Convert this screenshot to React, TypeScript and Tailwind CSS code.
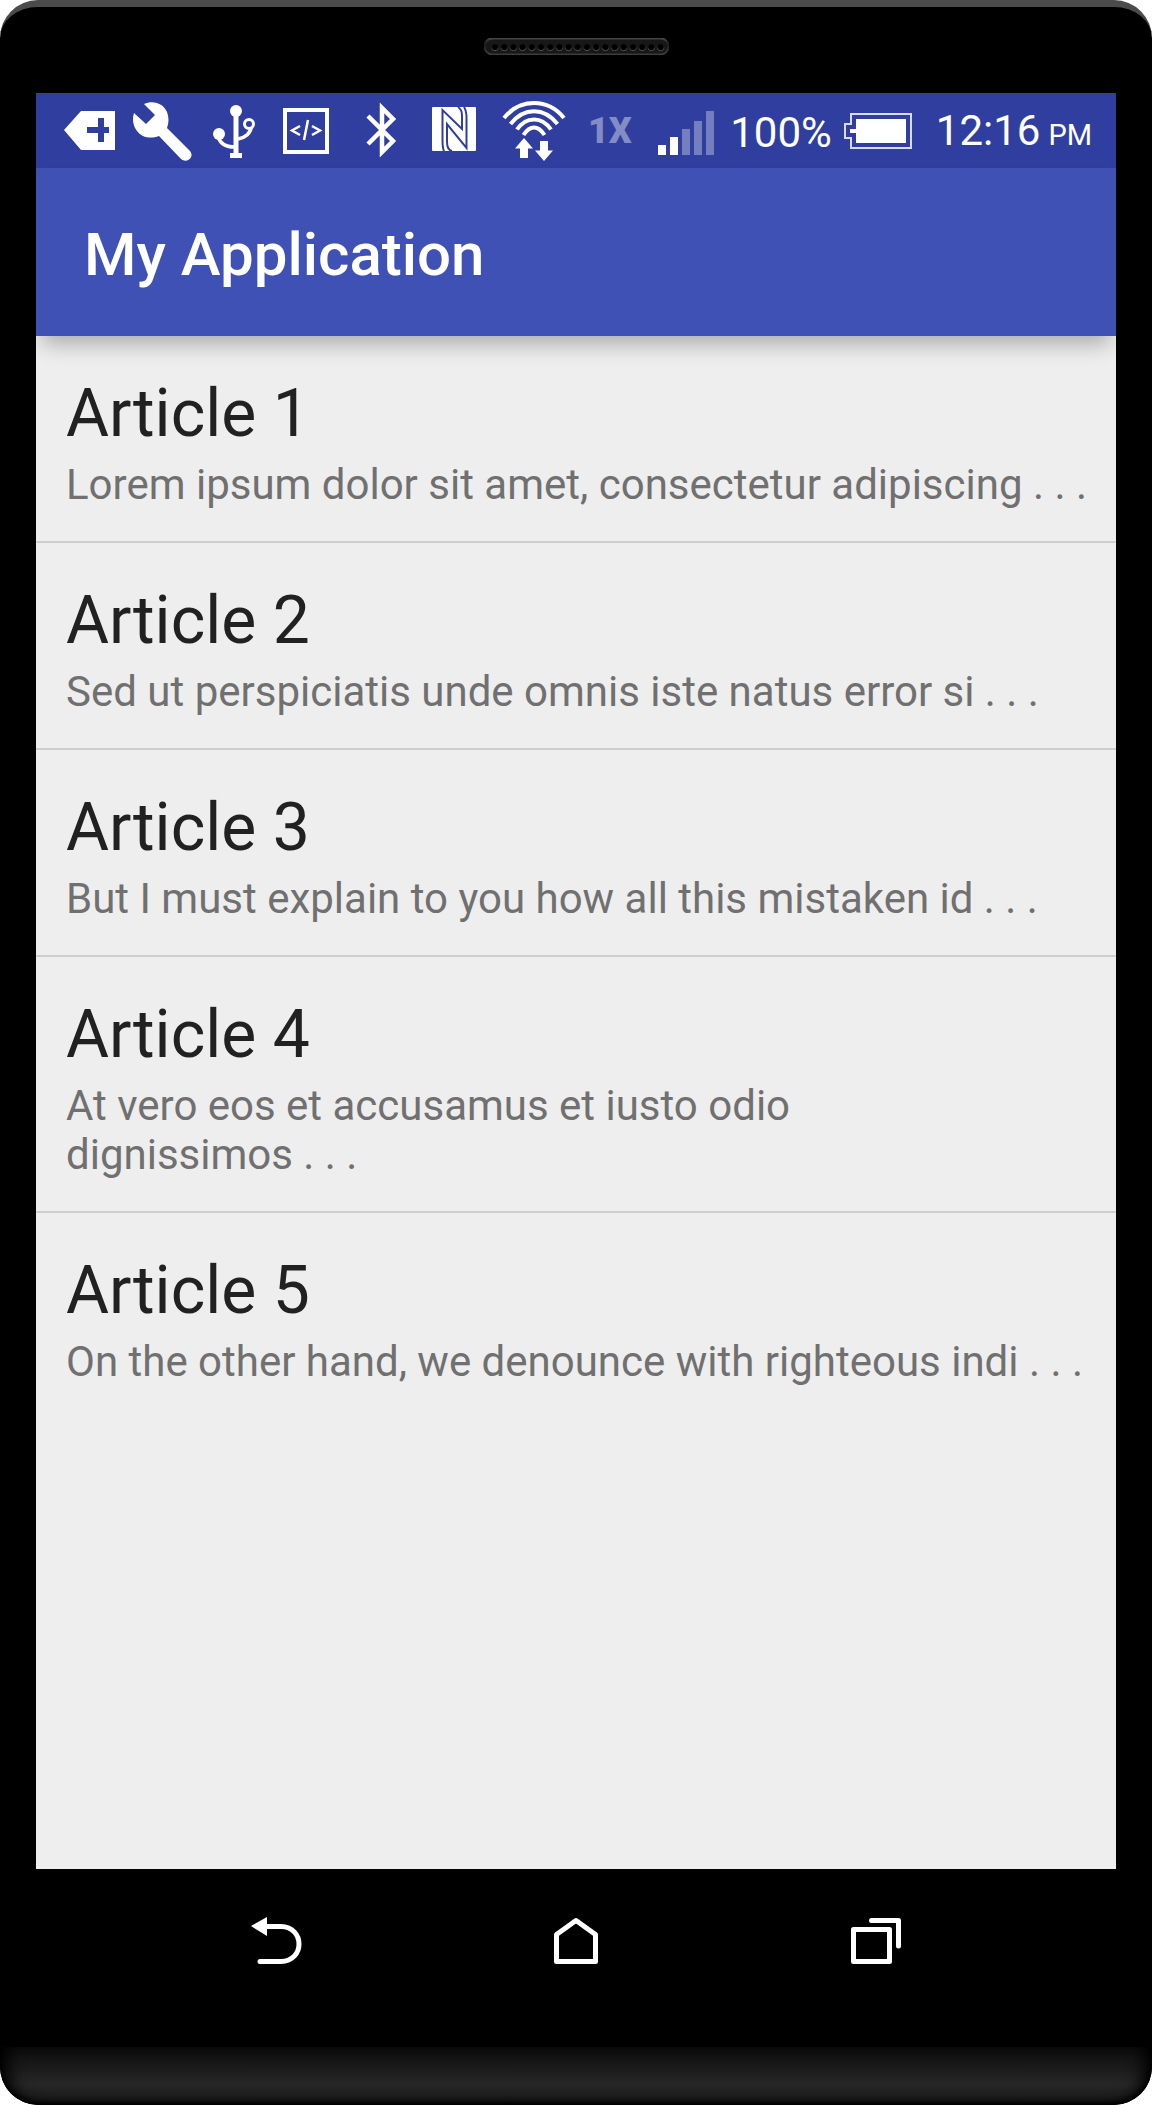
import type { ReactNode } from "react";

const articles = [
  { title: "Article 1", summary: "Lorem ipsum dolor sit amet, consectetur adipiscing . . ." },
  { title: "Article 2", summary: "Sed ut perspiciatis unde omnis iste natus error si . . ." },
  { title: "Article 3", summary: "But I must explain to you how all this mistaken id . . ." },
  { title: "Article 4", summary: "At vero eos et accusamus et iusto odio\ndignissimos . . ." },
  { title: "Article 5", summary: "On the other hand, we denounce with righteous indi . . ." },
];

function StatusIcon({ children }: { children: ReactNode }) {
  return (
    <svg viewBox="0 0 72 75" className="h-[75px] w-[72px] shrink-0" fill="#fff" aria-hidden="true">
      {children}
    </svg>
  );
}

function Speaker() {
  return (
    <svg viewBox="0 0 185 17" className="h-[17px] w-[185px]" aria-hidden="true">
      <defs>
        <linearGradient id="rim" x1="0" y1="0" x2="0" y2="1">
          <stop offset="0" stopColor="#474747" />
          <stop offset="0.35" stopColor="#1c1c1c" />
          <stop offset="1" stopColor="#3c3c3c" />
        </linearGradient>
        <linearGradient id="hole" x1="0" y1="0" x2="0" y2="1">
          <stop offset="0.35" stopColor="#161616" />
          <stop offset="1" stopColor="#565656" />
        </linearGradient>
      </defs>
      <rect x="0.5" y="0.5" width="184" height="16" rx="8" fill="#181818" stroke="url(#rim)" strokeWidth="2" />
      {Array.from({ length: 19 }, (_, i) => (
        <circle key={i} cx={11 + i * 9.2} cy="9.2" r="3.5" fill="#000" stroke="url(#hole)" />
      ))}
    </svg>
  );
}

function StatusBar() {
  return (
    <div className="flex h-[75px] items-center bg-[#303f9f] pl-[18px] pr-6 text-white">
      <StatusIcon>
        <path fillRule="evenodd" d="M10 37 27 18H61V57H27ZM44 25V34H33V40H44V49H50V40H55V34H50V25Z" />
      </StatusIcon>
      <StatusIcon>
        <path d="M8 20 20 31 29 22 18 11C27 7 37 10 41 19C43 24 43 30 41 35L64 58C69 64 61 71 55 66L33 43C25 46 16 45 11 38C7 33 6 26 8 20Z" />
      </StatusIcon>
      <StatusIcon>
        <circle cx="38" cy="18" r="6" />
        <circle cx="21" cy="41" r="6" />
        <circle cx="51" cy="31" r="4.5" fill="none" stroke="#fff" strokeWidth="3" />
        <path d="M35.5 18H40.5V60H44V65H32V60H35.5Z" />
        <path d="M20 43C22 51 28 54 36 54M40 46C47 45 53 40 53 34" fill="none" stroke="#fff" strokeWidth="3.5" />
      </StatusIcon>
      <StatusIcon>
        <g fill="none" stroke="#fff">
          <rect x="15" y="17" width="42" height="42" strokeWidth="4" />
          <path d="M30 33 22 37.500 30 42M42 33 50 37.500 42 42M38 27 34 47" strokeWidth="2.5" />
        </g>
      </StatusIcon>
      <StatusIcon>
        <path d="M26 23 51 48 40 59V15L51 26 26 51" fill="none" stroke="#fff" strokeWidth="4.5" />
      </StatusIcon>
      <StatusIcon>
        <rect x="18" y="14" width="44" height="44" rx="1" />
        <g fill="none" stroke="#303f9f" strokeWidth="2">
          <path d="M30 58C28.500 55 28.500 52 28.500 47V17L48 36V22C48 18 47 16 44 14" />
          <path d="M50 14C52 17 52.500 20 52.500 25V55L33 31V49C33 54 34 57 38 58" />
        </g>
      </StatusIcon>
      <span className="ml-3 shrink-0">
        <StatusIcon>
          <g fill="none" stroke="#fff" strokeWidth="4">
            <path d="M6 25C22 5 50 5 66 25M12.500 31C26 14 46 14 59.500 31M19 36.500C28 23 44 23 53 36.500M25.500 42C32 32 40 32 46.500 42" />
          </g>
          <path d="M26 45 35 55.500H30V65H22V55.500H17ZM46 68 37 57.500H42V48H50V57.500H55Z" />
        </StatusIcon>
      </span>
      <span className="ml-[18px] text-[36px] font-black leading-none text-[#838cc5]">1X</span>
      <svg viewBox="0 0 56 44" className="ml-auto mt-1 h-11 w-14 shrink-0" fill="#fff" aria-hidden="true">
        <path d="M0 34H8V44H0ZM12 26H20V44H12Z" />
        <path d="M24 18H32V44H24ZM36 10H44V44H36ZM48 0H56V44H48Z" fill="#757fbf" />
      </svg>
      <span className="ml-4 pt-1 text-[42px] leading-[50px]">100%</span>
      <svg viewBox="0 0 68 36" className="ml-3 h-9 w-17 shrink-0" fill="#fff" aria-hidden="true">
        <path d="M7 1H67V35H7V25H1V11H7Z" fill="none" stroke="#d9dcef" strokeWidth="2" />
        <path d="M12 6H62V30H12V20H6V16H12Z" />
      </svg>
      <div className="ml-6 flex items-baseline gap-2 whitespace-nowrap pt-1 text-[42px] leading-[50px]">
        <span>12:16</span>
        <span className="text-[29px]">PM</span>
      </div>
    </div>
  );
}

export default function App() {
  return (
    <div className="bg-white font-['Roboto',sans-serif]">
      <div className="flex min-h-screen flex-col overflow-hidden rounded-[38px] border-t-[7px] border-[#4b4b4b] bg-black">
        <div className="flex h-[86px] shrink-0 justify-center pt-[31px]">
          <Speaker />
        </div>
        <div className="mx-9 flex flex-1 flex-col overflow-hidden bg-[#eeeeee]">
          <StatusBar />
          <header className="flex h-[168px] items-center bg-[#3f51b5] px-12 pt-1.5 shadow-[0_14px_20px_-6px_rgba(0,0,0,0.28)]">
            <h1 className="text-[60px] font-medium leading-[72px] text-white">My Application</h1>
          </header>
          <ul className="divide-y-2 divide-[#cecece]">
            {articles.map(({ title, summary }) => (
              <li key={title}>
                <a href="#" className="flex flex-col gap-2 pb-8 pl-[30px] pr-5 pt-[39px]">
                  <h2 className="text-[66px] leading-[77px] text-[#212121]">{title}</h2>
                  <p className="whitespace-pre-line text-[42px] leading-[49px] text-[#707070]">{summary}</p>
                </a>
              </li>
            ))}
          </ul>
        </div>
        <nav className="grid h-36 shrink-0 grid-cols-3 px-[126px]">
          <button type="button" aria-label="Back" className="flex items-center justify-center">
            <svg viewBox="0 0 52 48" className="h-12 w-[52px]" aria-hidden="true">
              <path d="M1 9 17 0V19Z" fill="#fff" />
              <path d="M15 9.500H31C55 10 55 44 31 44.500H10" fill="none" stroke="#fff" strokeWidth="5" strokeLinecap="round" />
            </svg>
          </button>
          <button type="button" aria-label="Home" className="flex items-center justify-center">
            <svg viewBox="0 0 44 48" className="h-12 w-11" aria-hidden="true">
              <path d="M2.500 17.500 22 3.500 41.500 17.500V44.500H2.500Z" fill="none" stroke="#fff" strokeWidth="5" strokeLinejoin="round" />
            </svg>
          </button>
          <button type="button" aria-label="Recent apps" className="flex items-center justify-center">
            <svg viewBox="0 0 50 48" className="h-12 w-[50px]" aria-hidden="true">
              <path d="M2.500 12.500H38.500V44.500H2.500Z M20.500 3.500H47.500V29" fill="none" stroke="#fff" strokeWidth="5" strokeLinecap="round" strokeLinejoin="round" />
            </svg>
          </button>
        </nav>
        <div className="mt-[34px] h-[58px] shrink-0 rounded-b-[38px] bg-linear-to-b from-[#0c0c0c] via-[#272727] via-65% to-[#141414] shadow-[inset_18px_0_16px_-10px_#000,inset_-18px_0_16px_-10px_#000,inset_0_-3px_4px_#000]" />
      </div>
    </div>
  );
}
